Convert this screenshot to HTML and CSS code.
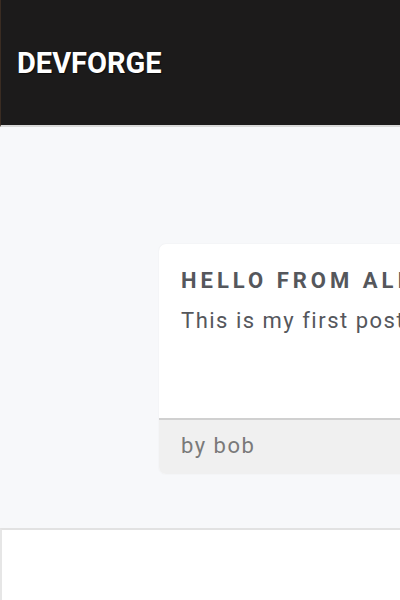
FILE: index.html
```html
<!DOCTYPE html>
<html>
<head>
<meta charset="utf-8">
<link rel="stylesheet" href="styles.css">
</head>
<body>
<header class="topbar">
  <div class="brand">DEVFORGE</div>
</header>
<main class="feed">
  <article class="card">
    <div class="card-body">
      <h2 class="card-title">HELLO FROM ALICE</h2>
      <p class="card-text">This is my first post</p>
    </div>
    <div class="card-footer">by bob</div>
  </article>
</main>
<section class="composer"></section>
</body>
</html>
```

FILE: styles.css
```css
* { box-sizing: border-box; }
html, body { margin: 0; padding: 0; }
body {
  font-family: Roboto, "Noto Sans", sans-serif;
  background: #f7f8fa;
  width: 400px;
  height: 600px;
  overflow: hidden;
}
.topbar {
  height: 127px;
  background: #1c1b1b;
  display: flex;
  align-items: center;
  padding-left: 16px;
  border-bottom: 2px solid #d9d9d9;
  border-left: 1px solid #3a2c22;
}
.brand {
  color: #fff;
  font-weight: 700;
  font-size: 29px;
  letter-spacing: 0;
  text-shadow: 1px 1px 1px rgba(0,0,0,0.6);
}
.feed {
  height: 401px;
  display: flex;
  align-items: flex-start;
  padding-top: 117px;
  padding-left: 159px;
  overflow: hidden;
}
.card {
  flex: 0 0 320px;
  background: #fff;
  border-radius: 7px;
  box-shadow: 0 0 2px rgba(0,0,0,0.06);
  overflow: hidden;
  height: 230px;
  display: flex;
  flex-direction: column;
}
.card-body {
  flex: 1;
  padding: 24px 22px 0 22px;
}
.card-title {
  margin: 0;
  font-size: 22px;
  font-weight: 700;
  letter-spacing: 4px;
  color: #55575c;
  line-height: 26px;
  white-space: nowrap;
}
.card-text {
  margin: 13px 0 0;
  font-size: 22px;
  letter-spacing: 1.5px;
  color: #55575c;
  line-height: 28px;
  white-space: nowrap;
}
.card-footer {
  height: 56px;
  background: #f0f0f0;
  border-top: 2px solid #d0d0d0;
  padding: 0 22px 3px;
  display: flex;
  align-items: center;
  font-size: 22px;
  letter-spacing: 1.5px;
  color: #7a7a7a;
}
.composer {
  height: 72px;
  background: #fff;
  border-top: 2px solid #e2e2e2;
  border-left: 2px solid #e6e6e6;
}
```
